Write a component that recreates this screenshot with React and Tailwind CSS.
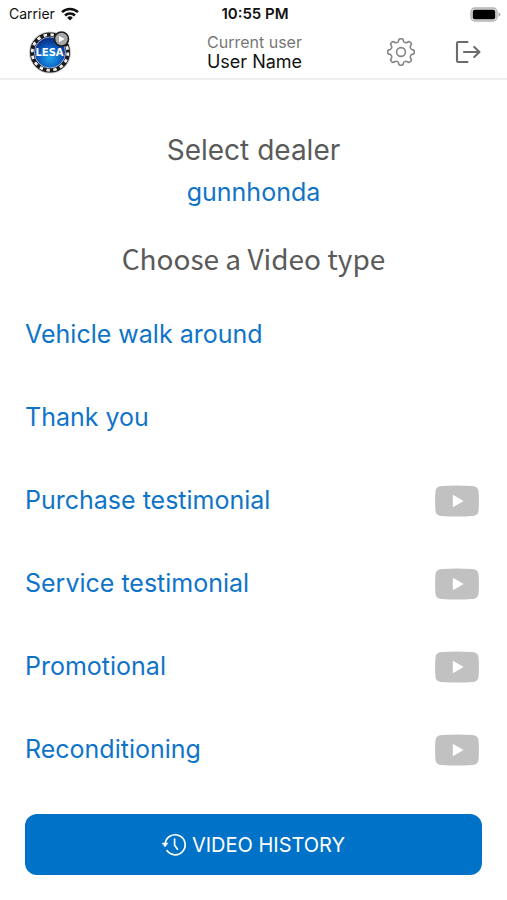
import React from 'react'

const videoTypes = [
	{ label: 'Vehicle walk around', youtube: false },
	{ label: 'Thank you', youtube: false },
	{ label: 'Purchase testimonial', youtube: true },
	{ label: 'Service testimonial', youtube: true },
	{ label: 'Promotional', youtube: true },
	{ label: 'Reconditioning', youtube: true },
]

const toothAngles = [0, 45, 90, 135, 180, 225, 270, 315]

function Wifi() {
	return (
		<svg viewBox="0 0 18 14" className="h-[14px] w-[18px]" aria-hidden="true">
			<g fill="none" stroke="#111" strokeWidth="2.5">
				<path d="M1 5.2a11.4 11.4 0 0 1 16 0" />
				<path d="M4 8.5a7.1 7.1 0 0 1 10 0" />
			</g>
			<path d="M9 13.6 6.2 10.7a4 4 0 0 1 5.6 0z" fill="#111" />
		</svg>
	)
}

function Battery() {
	return (
		<svg viewBox="0 0 31 15" className="h-[15px] w-[31px]" aria-hidden="true">
			<rect x="1" y="1" width="26" height="13" rx="4" fill="#ddd" stroke="#b5b5b5" strokeWidth="1.4" />
			<rect x="2.8" y="2.8" width="22.4" height="9.4" rx="2" fill="#000" />
			<path d="M28.5 5.2q2 .8 2 2.3t-2 2.3z" fill="#a8a8a8" />
		</svg>
	)
}

function Logo() {
	return (
		<svg viewBox="0 0 44 44" className="h-[44px] w-[44px]" aria-hidden="true">
			<defs>
				<radialGradient id="ball" cx="50%" cy="68%" r="62%">
					<stop offset="0" stopColor="#1fa5ee" />
					<stop offset="0.55" stopColor="#0d62c2" />
					<stop offset="1" stopColor="#0b2f86" />
				</radialGradient>
			</defs>
			<circle cx="22" cy="22.5" r="21" fill="#c4c4c4" />
			<circle cx="22" cy="22.5" r="17.8" fill="none" stroke="#1a1a1a" strokeWidth="4.4" />
			<circle cx="22" cy="22.5" r="17.8" fill="none" stroke="#ececec" strokeWidth="2.8" strokeDasharray="3.4 3.59" />
			<circle cx="22" cy="22.5" r="15.5" fill="url(#ball)" stroke="#aab2d6" strokeWidth="0.8" />
			<text
				x="21.5"
				y="26"
				textAnchor="middle"
				fontFamily="DejaVu Sans, sans-serif"
				fontWeight="bold"
				fontSize="10"
				fill="#fff"
			>
				LESA
			</text>
			<circle cx="33.5" cy="9" r="7" fill="#a9a9a9" stroke="#1c1c1c" strokeWidth="1.6" />
			<path d="m30.5 5 7 4-7 4z" fill="#fff" stroke="#8c8c8c" strokeWidth="0.7" />
		</svg>
	)
}

function Gear() {
	return (
		<svg viewBox="-14 -14 28 28" className="h-[28px] w-[28px]" fill="none" stroke="#868686" strokeWidth="1.6">
			{toothAngles.map(angle => (
				<path
					key={angle}
					transform={`rotate(${angle})`}
					d="M-3.9-9.4C-3-9.9-2.5-10.3-2.4-11.2A2.4 2.2 0 0 1 2.4-11.2C2.5-10.3 3-9.9 3.9-9.4"
				/>
			))}
			<circle r="4.4" />
		</svg>
	)
}

function Exit() {
	return (
		<svg
			viewBox="0 0 26 24"
			className="h-[24px] w-[26px]"
			fill="none"
			stroke="#6c6c6c"
			strokeWidth="2.1"
			strokeLinecap="round"
			strokeLinejoin="round"
		>
			<path d="M12.5 2H3.2Q2 2 2 3.2v17.6Q2 22 3.2 22h9.3" />
			<path d="M9 12h15.5M19.2 7 24.5 12l-5.3 5" />
		</svg>
	)
}

function YoutubeIcon() {
	return (
		<svg viewBox="0 0 44 32" className="h-[32px] w-[44px]" aria-hidden="true">
			<path
				d="M7 .9Q22-.1 37 .9C41.5 1.2 43.3 3 43.6 7Q44.2 16 43.6 25C43.3 29 41.5 30.8 37 31.1Q22 32.1 7 31.1C2.5 30.8.7 29 .4 25Q-.2 16 .4 7C.7 3 2.5 1.2 7 .9Z"
				fill="#c1c1c1"
			/>
			<path d="M17.8 9.8v12.4l10.8-6.2z" fill="#fff" />
		</svg>
	)
}

function HistoryIcon() {
	return (
		<svg
			viewBox="0 0 24 24"
			className="h-[24px] w-[24px]"
			fill="none"
			stroke="#fff"
			strokeWidth="1.7"
			strokeLinecap="round"
			aria-hidden="true"
		>
			<path d="M3.2 11A10 10 0 1 1 5 17.6" />
			<path d="M12.6 6v6.2l2.9 4" />
			<path d="M.6 10.2h5.2L3.2 13.6z" fill="#fff" strokeWidth="0.8" />
		</svg>
	)
}

function App() {
	return (
		<div className="min-h-screen bg-white font-['Inter',sans-serif]">
			<header className="border-b-2 border-[#eeeeee]">
				<div className="grid grid-cols-3 items-center pl-[9px] pr-[6px] pt-1 text-[14px] leading-5 text-[#111]">
					<div className="flex items-center gap-[6px]">
						<span>Carrier</span>
						<Wifi />
					</div>
					<span className="text-center text-[15px] font-semibold">10:55 PM</span>
					<div className="flex justify-end">
						<Battery />
					</div>
				</div>
				<div className="mt-[6px] grid grid-cols-3 items-center pb-1 pl-7 pr-[26px]">
					<a href="#home" aria-label="LESA">
						<Logo />
					</a>
					<div className="flex flex-col items-center whitespace-nowrap">
						<span className="text-[16px] leading-5 text-[#777]">Current user</span>
						<span className="text-[18px] leading-5 text-[#111]">User Name</span>
					</div>
					<div className="flex items-center justify-end gap-10">
						<button aria-label="Settings">
							<Gear />
						</button>
						<button aria-label="Log out">
							<Exit />
						</button>
					</div>
				</div>
			</header>
			<main className="px-[25px] pb-6 pt-[52px]">
				<div className="flex flex-col items-center">
					<h1 className="text-[28px] leading-9 text-[#5a5a5a]">Select dealer</h1>
					<button className="mt-1 text-[25px] leading-10 text-[#0f74c8]">gunnhonda</button>
					<h2 className="mt-[26px] font-['Noto_Sans_CJK_SC',sans-serif] text-[28px] leading-10 text-[#5a5a5a]">
						Choose a Video type
					</h2>
				</div>
				<ul className="mt-[15px]">
					{videoTypes.map(type => (
						<li key={type.label}>
							<button className="flex h-[83px] w-full items-center justify-between pr-[3px] text-left text-[25px] text-[#0f74c8]">
								<span>{type.label}</span>
								{type.youtube && <YoutubeIcon />}
							</button>
						</li>
					))}
				</ul>
				<button className="mt-[23px] flex h-[61px] w-full items-center justify-center gap-[6px] rounded-xl bg-[#0072c8] text-[20px] text-white">
					<HistoryIcon />
					<span>VIDEO HISTORY</span>
				</button>
			</main>
		</div>
	)
}

export default App
